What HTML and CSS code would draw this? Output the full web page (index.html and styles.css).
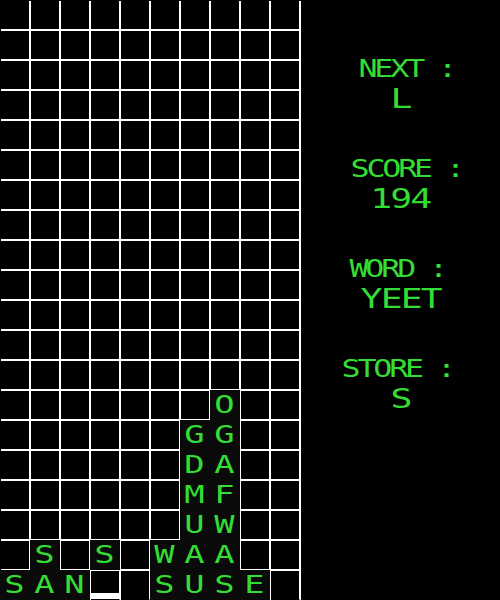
FILE: index.html
```html
<!DOCTYPE html>
<html>
<head>
<meta charset="utf-8">
<title>Word Tetris</title>
<link rel="stylesheet" href="styles.css">
</head>
<body>
<div class="game">
  <div class="board">
    <div class="c"></div><div class="c"></div><div class="c"></div><div class="c"></div><div class="c"></div><div class="c"></div><div class="c"></div><div class="c"></div><div class="c"></div><div class="c"></div>
    <div class="c"></div><div class="c"></div><div class="c"></div><div class="c"></div><div class="c"></div><div class="c"></div><div class="c"></div><div class="c"></div><div class="c"></div><div class="c"></div>
    <div class="c"></div><div class="c"></div><div class="c"></div><div class="c"></div><div class="c"></div><div class="c"></div><div class="c"></div><div class="c"></div><div class="c"></div><div class="c"></div>
    <div class="c"></div><div class="c"></div><div class="c"></div><div class="c"></div><div class="c"></div><div class="c"></div><div class="c"></div><div class="c"></div><div class="c"></div><div class="c"></div>
    <div class="c"></div><div class="c"></div><div class="c"></div><div class="c"></div><div class="c"></div><div class="c"></div><div class="c"></div><div class="c"></div><div class="c"></div><div class="c"></div>
    <div class="c"></div><div class="c"></div><div class="c"></div><div class="c"></div><div class="c"></div><div class="c"></div><div class="c"></div><div class="c"></div><div class="c"></div><div class="c"></div>
    <div class="c"></div><div class="c"></div><div class="c"></div><div class="c"></div><div class="c"></div><div class="c"></div><div class="c"></div><div class="c"></div><div class="c"></div><div class="c"></div>
    <div class="c"></div><div class="c"></div><div class="c"></div><div class="c"></div><div class="c"></div><div class="c"></div><div class="c"></div><div class="c"></div><div class="c"></div><div class="c"></div>
    <div class="c"></div><div class="c"></div><div class="c"></div><div class="c"></div><div class="c"></div><div class="c"></div><div class="c"></div><div class="c"></div><div class="c"></div><div class="c"></div>
    <div class="c"></div><div class="c"></div><div class="c"></div><div class="c"></div><div class="c"></div><div class="c"></div><div class="c"></div><div class="c"></div><div class="c"></div><div class="c"></div>
    <div class="c"></div><div class="c"></div><div class="c"></div><div class="c"></div><div class="c"></div><div class="c"></div><div class="c"></div><div class="c"></div><div class="c"></div><div class="c"></div>
    <div class="c"></div><div class="c"></div><div class="c"></div><div class="c"></div><div class="c"></div><div class="c"></div><div class="c"></div><div class="c"></div><div class="c"></div><div class="c"></div>
    <div class="c"></div><div class="c"></div><div class="c"></div><div class="c"></div><div class="c"></div><div class="c"></div><div class="c"></div><div class="c"></div><div class="c"></div><div class="c"></div>
    <div class="c"></div><div class="c"></div><div class="c"></div><div class="c"></div><div class="c"></div><div class="c"></div><div class="c"></div><div class="c l"><span class="t">O</span></div><div class="c"></div><div class="c"></div>
    <div class="c"></div><div class="c"></div><div class="c"></div><div class="c"></div><div class="c"></div><div class="c"></div><div class="c l"><span class="t">G</span></div><div class="c l"><span class="t">G</span></div><div class="c"></div><div class="c"></div>
    <div class="c"></div><div class="c"></div><div class="c"></div><div class="c"></div><div class="c"></div><div class="c"></div><div class="c l"><span class="t">D</span></div><div class="c l"><span class="t">A</span></div><div class="c"></div><div class="c"></div>
    <div class="c"></div><div class="c"></div><div class="c"></div><div class="c"></div><div class="c"></div><div class="c"></div><div class="c l"><span class="t">M</span></div><div class="c l"><span class="t">F</span></div><div class="c"></div><div class="c"></div>
    <div class="c"></div><div class="c"></div><div class="c"></div><div class="c"></div><div class="c"></div><div class="c"></div><div class="c l"><span class="t">U</span></div><div class="c l"><span class="t">W</span></div><div class="c"></div><div class="c"></div>
    <div class="c"></div><div class="c l"><span class="t">S</span></div><div class="c"></div><div class="c l"><span class="t">S</span></div><div class="c"></div><div class="c l"><span class="t">W</span></div><div class="c l"><span class="t">A</span></div><div class="c l"><span class="t">A</span></div><div class="c"></div><div class="c"></div>
    <div class="c l"><span class="t">S</span></div><div class="c l"><span class="t">A</span></div><div class="c l"><span class="t">N</span></div><div class="c cursor"></div><div class="c"></div><div class="c l"><span class="t">S</span></div><div class="c l"><span class="t">U</span></div><div class="c l"><span class="t">S</span></div><div class="c l"><span class="t">E</span></div><div class="c"></div>
  </div>
  <div class="panel">
    <div class="block">
      <div class="label shift-r"><span class="t">NEXT :</span></div>
      <div class="value"><span class="t">L</span></div>
    </div>
    <div class="block">
      <div class="label shift-r"><span class="t">SCORE :</span></div>
      <div class="value"><span class="t">194</span></div>
    </div>
    <div class="block">
      <div class="label shift-l"><span class="t">WORD :</span></div>
      <div class="value"><span class="t">YEET</span></div>
    </div>
    <div class="block">
      <div class="label shift-l"><span class="t">STORE :</span></div>
      <div class="value"><span class="t">S</span></div>
    </div>
  </div>
</div>
</body>
</html>
```
FILE: styles.css
```css
html, body {
  margin: 0;
  padding: 0;
  background: #000;
}

body {
  width: 500px;
  height: 600px;
  overflow: hidden;
  font-family: "DejaVu Sans Mono", "Liberation Mono", monospace;
  color: #33dd33;
}

.game {
  display: flex;
  align-items: flex-start;
  width: 500px;
  height: 600px;
  padding: 1px 0 0 1px;
  box-sizing: border-box;
}

.board {
  display: grid;
  grid-template-columns: repeat(10, 30px);
  grid-template-rows: repeat(20, 30px);
  flex: none;
}

.c {
  position: relative;
  box-sizing: border-box;
  background: #000;
  border-right: 2px solid #fff;
  border-bottom: 2px solid #fff;
  display: flex;
  align-items: center;
  justify-content: center;
  font-size: 25px;
  line-height: 28px;
}

.board > .c:nth-child(n+191) {
  border-bottom-color: #000;
}

.c.l::before {
  content: "";
  position: absolute;
  left: -1px;
  top: -1px;
  width: 30px;
  height: 30px;
  background: #0a0a0a;
  z-index: 1;
}

.c.cursor {
  box-shadow: inset 0 -6px 0 #fff;
}

.t {
  display: inline-block;
  transform: scaleX(1.35);
  white-space: pre;
}

.c .t {
  position: relative;
  z-index: 2;
}

.panel {
  flex: 1;
  display: flex;
  flex-direction: column;
  align-items: center;
  gap: 40px;
  padding-top: 53px;
}

.block {
  display: flex;
  flex-direction: column;
  align-items: center;
}

.label {
  font-size: 24px;
  line-height: 30px;
  height: 30px;
}

.label .t {
  letter-spacing: -2.4px;
  transform: scaleX(1.32);
}

.value {
  font-size: 27px;
  line-height: 30px;
  height: 30px;
}

.value .t {
  letter-spacing: -1.4px;
  transform: scaleX(1.35);
}

.shift-r {
  padding-left: 12px;
}

.shift-l {
  padding-right: 6px;
}
```
